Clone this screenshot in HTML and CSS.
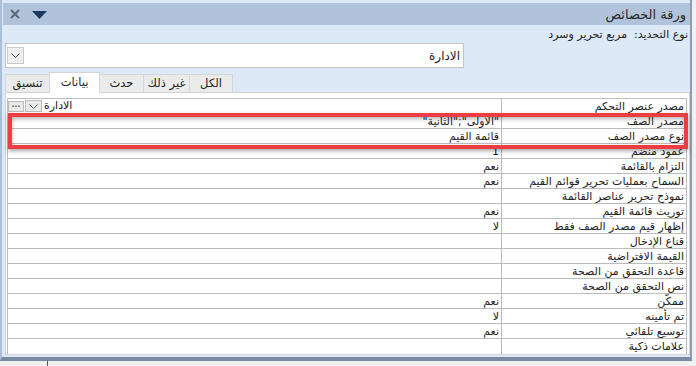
FILE: index.html
```html
<!DOCTYPE html>
<html lang="ar">
<head>
  <meta charset="UTF-8">
  <title>ورقة الخصائص</title>
  <link rel="stylesheet" href="styles.css">
</head>
<body>

  <div class="window">
    <div class="titlebar">
      <div class="title-tools">
        <svg class="close-icon" width="10" height="10" viewBox="0 0 10 10">
          <path d="M1 1L9 9M9 1L1 9" stroke="#5d6877" stroke-width="2"/>
        </svg>
        <svg class="menu-icon" width="15" height="8" viewBox="0 0 15 8">
          <path d="M0 0H15L7.5 8Z" fill="#1d3960"/>
        </svg>
      </div>
      <div class="title-text">ورقة الخصائص</div>
    </div>

    <div class="selection">نوع التحديد:&nbsp; مربع تحرير وسرد</div>

    <div class="combo">
      <div class="combo-btn">
        <svg width="9" height="5" viewBox="0 0 9 5"><path d="M0.5 0.5L4.5 4.5L8.5 0.5" fill="none" stroke="#555" stroke-width="1"/></svg>
      </div>
      <div class="combo-text">الادارة</div>
    </div>

    <div class="tabs">
      <div class="tab tab-format">تنسيق</div>
      <div class="tab tab-data active">بيانات</div>
      <div class="tab tab-event">حدث</div>
      <div class="tab tab-other">غير ذلك</div>
      <div class="tab tab-all">الكل</div>
    </div>

    <div class="panel">
      <div class="grid" dir="rtl">
        <div class="row">
          <div class="label">مصدر عنصر التحكم</div>
          <div class="value editor">
            <span class="editor-text">الادارة</span>
            <span class="mini-btn drop">
              <svg width="9" height="5" viewBox="0 0 9 5"><path d="M0.5 0.5L4.5 4.5L8.5 0.5" fill="none" stroke="#555" stroke-width="1"/></svg>
            </span>
            <span class="mini-btn dots">•••</span>
          </div>
        </div>
        <div class="row"><div class="label">مصدر الصف</div><div class="value">"الاولى";"الثانية"</div></div>
        <div class="row"><div class="label">نوع مصدر الصف</div><div class="value">قائمة القيم</div></div>
        <div class="row"><div class="label">عمود منضم</div><div class="value">1</div></div>
        <div class="row"><div class="label">التزام بالقائمة</div><div class="value">نعم</div></div>
        <div class="row"><div class="label">السماح بعمليات تحرير قوائم القيم</div><div class="value">نعم</div></div>
        <div class="row"><div class="label">نموذج تحرير عناصر القائمة</div><div class="value"></div></div>
        <div class="row"><div class="label">توريث قائمة القيم</div><div class="value">نعم</div></div>
        <div class="row"><div class="label">إظهار قيم مصدر الصف فقط</div><div class="value">لا</div></div>
        <div class="row"><div class="label">قناع الإدخال</div><div class="value"></div></div>
        <div class="row"><div class="label">القيمة الافتراضية</div><div class="value"></div></div>
        <div class="row"><div class="label">قاعدة التحقق من الصحة</div><div class="value"></div></div>
        <div class="row"><div class="label">نص التحقق من الصحة</div><div class="value"></div></div>
        <div class="row"><div class="label">ممكّن</div><div class="value">نعم</div></div>
        <div class="row"><div class="label">تم تأمينه</div><div class="value">لا</div></div>
        <div class="row"><div class="label">توسيع تلقائي</div><div class="value">نعم</div></div>
        <div class="row last"><div class="label">علامات ذكية</div><div class="value"></div></div>

        <div class="highlight"></div>
      </div>
    </div>
  </div>

  <div class="statusbar"><span class="splitter"></span></div>

</body>
</html>
```

FILE: styles.css
```css
* { box-sizing: border-box; }

body {
  margin: 0;
  font-family: 'DejaVu Sans', sans-serif;
  background-color: #f0f0f0;
  color: #222;
}

.window {
  width: 692px;
  height: 361px;
  background-color: #dde9f7;
  border-left: 2px solid #a8bedb;
  border-right: 2px solid #8d9cb2;
  border-bottom: 4px solid #7a8aa1;
  padding-top: 3px;
  display: flex;
  flex-direction: column;
}

/* title bar */
.titlebar {
  height: 22px;
  margin: 0 0 0 1px;
  background-color: #b1c3da;
  display: flex;
  align-items: center;
  justify-content: space-between;
  padding: 0 4px 0 7px;
}

.title-tools {
  display: flex;
  align-items: center;
  gap: 12px;
}

.menu-icon {
  margin-top: 1px;
}

.title-text {
  font-size: 13px;
  color: #2b2b2b;
}

.selection {
  direction: rtl;
  height: 18px;
  line-height: 19px;
  font-size: 11px;
  padding-right: 2px;
  color: #222;
}

/* object combo */
.combo {
  width: 459px;
  height: 25px;
  margin-left: 3px;
  background: white;
  border: 1px solid #c4c4c4;
  display: flex;
  align-items: center;
  justify-content: space-between;
  padding: 0 3px 0 1px;
}

.combo-btn {
  width: 17px;
  height: 17px;
  background: #efefef;
  border: 1px solid #c9c9c9;
  display: flex;
  align-items: center;
  justify-content: center;
}

.combo-text {
  font-size: 12px;
}

/* tabs */
.tabs {
  display: flex;
  align-items: flex-end;
  height: 20px;
  margin-top: 4px;
  padding-left: 3px;
}

.tab {
  height: 18px;
  line-height: 17px;
  font-size: 11.5px;
  text-align: center;
  background: #ebebeb;
  border: 1px solid #d6d6d6;
  border-bottom: none;
  margin-right: -1px;
  color: #222;
}

.tab-format { width: 45px; }
.tab-data { width: 51px; }
.tab-event { width: 45px; }
.tab-other { width: 47px; }
.tab-all { width: 44px; }

.tab.active {
  height: 21px;
  line-height: 18px;
  background: white;
  position: relative;
  z-index: 1;
  margin-bottom: -1px;
}

/* property grid */
.panel {
  width: 685px;
  height: 263px;
  margin-left: 3px;
  background: white;
  border: 1px solid #d3d3d3;
  padding: 5px 0 0 1px;
}

.grid {
  position: relative;
  width: 680px;
  border-top: 1px solid #bdbdbd;
  border-left: 1px solid #bdbdbd;
  border-right: 1px solid #bdbdbd;
}

.row {
  display: grid;
  grid-template-columns: 185px 1fr;
  height: 15px;
  border-bottom: 1px solid #bbbbbb;
  font-size: 11px;
  line-height: 16px;
}

.row.last {
  border-bottom: none;
}

.label {
  border-left: 1px solid #bbbbbb;
  padding-right: 2px;
  white-space: nowrap;
  overflow: hidden;
}

.value {
  padding-right: 2px;
  white-space: nowrap;
  overflow: hidden;
}

.value.editor {
  display: flex;
  align-items: center;
  justify-content: flex-end;
  padding-left: 0;
  gap: 1px;
}

.editor-text {
  margin-left: 1px;
}

.mini-btn {
  height: 12px;
  background: #e9e9e9;
  border: 1px solid #bcbcbc;
  display: flex;
  align-items: center;
  justify-content: center;
}

.mini-btn.drop { width: 17px; }

.mini-btn.dots {
  width: 16px;
  height: 11px;
  font-size: 5px;
  color: #111;
  letter-spacing: 0;
}

.highlight {
  position: absolute;
  left: 0;
  top: 14px;
  width: 680px;
  height: 36px;
  border: 4px solid #ec3d43;
  box-shadow: 0 2px 4px rgba(0, 0, 0, 0.35), inset 0 2px 4px rgba(0, 0, 0, 0.3);
}

.statusbar {
  height: 5px;
  position: relative;
}

.splitter {
  position: absolute;
  left: 47px;
  top: 0;
  width: 1px;
  height: 5px;
  background: #555;
}
```
